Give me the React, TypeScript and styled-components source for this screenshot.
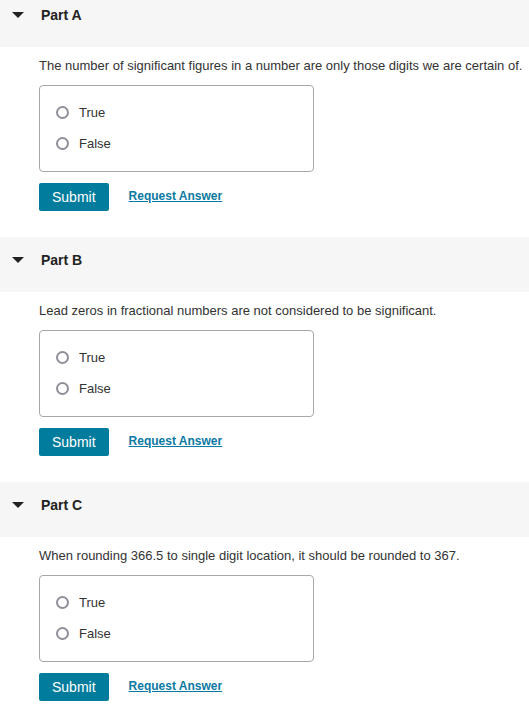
import React from "react";
import styled, { createGlobalStyle } from "styled-components";

const GlobalStyle = createGlobalStyle`
  body {
    margin: 0;
    background: #fff;
    font-family: "Liberation Sans", Arial, sans-serif;
    color: #333;
  }
`;

const Page = styled.div`
  margin-top: -8px;
  display: flex;
  flex-direction: column;
`;

const Section = styled.section`
  display: flex;
  flex-direction: column;
  padding-bottom: 26px;
`;

const PartHeader = styled.div`
  display: flex;
  align-items: flex-start;
  height: 55px;
  box-sizing: border-box;
  padding: 15px 0 0 12px;
  background: #f6f6f6;
`;

const Caret = styled.span`
  width: 0;
  height: 0;
  margin-top: 5px;
  border-left: 6px solid transparent;
  border-right: 6px solid transparent;
  border-top: 6px solid #222;
`;

const PartTitle = styled.h2`
  margin: 0 0 0 17px;
  font-size: 14px;
  line-height: 16px;
  font-weight: bold;
  color: #222;
`;

const Body = styled.div`
  display: flex;
  flex-direction: column;
  align-items: flex-start;
  padding: 11px 0 0 39px;
`;

const Question = styled.p`
  margin: 0;
  font-size: 13px;
  line-height: 15px;
  color: #333;
`;

const Choices = styled.fieldset`
  margin: 12px 0 0;
  width: 275px;
  height: 87px;
  box-sizing: border-box;
  padding: 15px 16px 17px;
  border: 1px solid #a8a8a8;
  border-radius: 4px;
  display: flex;
  flex-direction: column;
  gap: 9px;
`;

const Choice = styled.label`
  display: flex;
  align-items: center;
  height: 22px;
  gap: 10px;
  font-size: 13px;
  color: #333;
`;

const Radio = styled.input`
  appearance: none;
  margin: 0;
  width: 13px;
  height: 13px;
  box-sizing: border-box;
  border: 2px solid #8f8f9a;
  border-radius: 50%;
  background: #fff;
`;

const Actions = styled.div`
  display: flex;
  align-items: center;
  gap: 20px;
  margin-top: 11px;
`;

const SubmitButton = styled.button`
  height: 28px;
  padding: 0 13px;
  border: none;
  border-radius: 2px;
  background: #027c9c;
  color: #fff;
  font-family: "Liberation Sans", Arial, sans-serif;
  font-size: 14px;
`;

const AnswerLink = styled.a`
  font-size: 12px;
  font-weight: bold;
  color: #0a79a3;
  text-decoration: underline;
  margin-top: -2px;
`;

const parts = [
  {
    name: "Part A",
    text: "The number of significant figures in a number are only those digits we are certain of.",
  },
  {
    name: "Part B",
    text: "Lead zeros in fractional numbers are not considered to be significant.",
  },
  {
    name: "Part C",
    text: "When rounding 366.5 to single digit location, it should be rounded to 367.",
  },
];

export default function App() {
  return (
    <>
      <GlobalStyle />
      <Page>
        {parts.map((part) => (
          <Section key={part.name}>
            <PartHeader>
              <Caret />
              <PartTitle>{part.name}</PartTitle>
            </PartHeader>
            <Body>
              <Question>{part.text}</Question>
              <Choices>
                <Choice>
                  <Radio type="radio" name={part.name} />
                  True
                </Choice>
                <Choice>
                  <Radio type="radio" name={part.name} />
                  False
                </Choice>
              </Choices>
              <Actions>
                <SubmitButton>Submit</SubmitButton>
                <AnswerLink href="#">Request Answer</AnswerLink>
              </Actions>
            </Body>
          </Section>
        ))}
      </Page>
    </>
  );
}
